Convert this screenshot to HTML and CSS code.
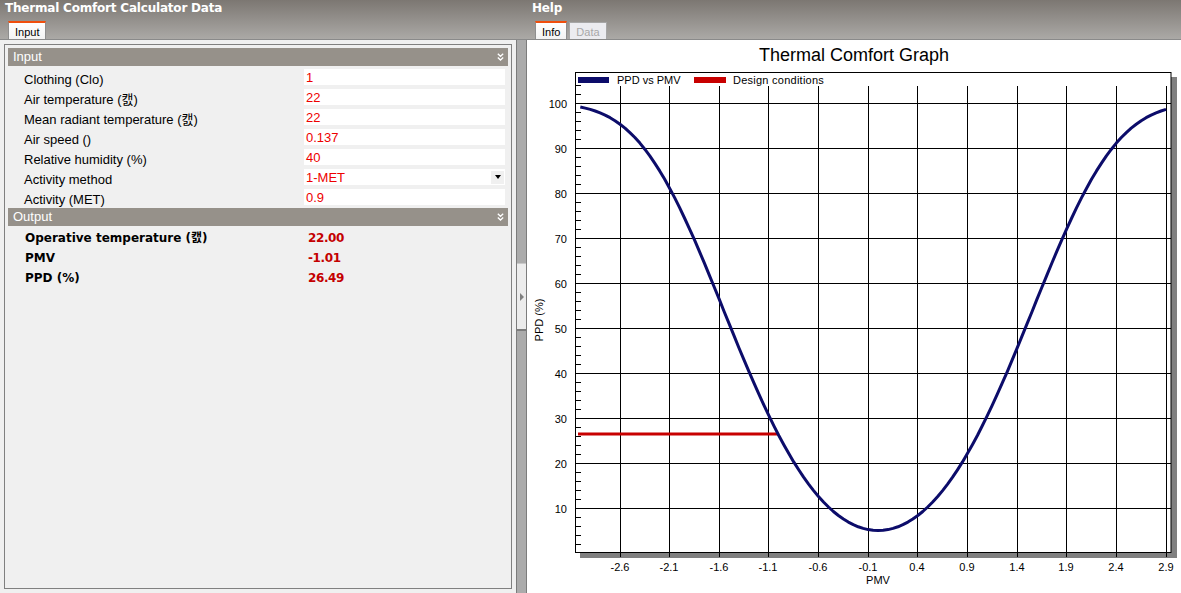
FILE: index.html
```html
<!DOCTYPE html>
<html lang="en">
<head>
<meta charset="utf-8">
<title>Thermal Comfort Calculator</title>
<link rel="stylesheet" href="styles.css">
</head>
<body>
<div class="app">
  <section class="pane pane-left">
    <header class="pane-head">
      <div class="pane-title">Thermal Comfort Calculator Data</div>
      <div class="tabs"><div class="tab active">Input</div></div>
    </header>
    <div class="pane-body gray">
      <div class="box">
        <div class="sect"><span>Input</span><svg class="chev" width="7" height="8" viewBox="0 0 7 8"><polyline points="0.8,0.8 3.5,3.3 6.2,0.8"/><polyline points="0.8,4.5 3.5,7 6.2,4.5"/></svg></div>
        <div class="rows">
          <div class="row"><div class="lbl">Clothing (Clo)</div><div class="val">1</div></div>
          <div class="row"><div class="lbl">Air temperature (캜)</div><div class="val">22</div></div>
          <div class="row"><div class="lbl">Mean radiant temperature (캜)</div><div class="val">22</div></div>
          <div class="row"><div class="lbl">Air speed ()</div><div class="val">0.137</div></div>
          <div class="row"><div class="lbl">Relative humidity (%)</div><div class="val">40</div></div>
          <div class="row"><div class="lbl">Activity method</div><div class="val drop"><span>1-MET</span><span class="drop-btn"><span class="drop-tri"></span></span></div></div>
          <div class="row"><div class="lbl">Activity (MET)</div><div class="val">0.9</div></div>
        </div>
        <div class="sect out"><span>Output</span><svg class="chev" width="7" height="8" viewBox="0 0 7 8"><polyline points="0.8,0.8 3.5,3.3 6.2,0.8"/><polyline points="0.8,4.5 3.5,7 6.2,4.5"/></svg></div>
        <div class="outs">
          <div class="orow"><div class="olbl">Operative temperature (캜)</div><div class="oval">22.00</div></div>
          <div class="orow"><div class="olbl">PMV</div><div class="oval">-1.01</div></div>
          <div class="orow"><div class="olbl">PPD (%)</div><div class="oval">26.49</div></div>
        </div>
      </div>
    </div>
  </section>

  <div class="splitter">
    <div class="split-head"></div>
    <div class="split-bar"><div class="split-btn"><span class="split-tri"></span></div></div>
  </div>

  <section class="pane pane-right">
    <header class="pane-head">
      <div class="pane-title">Help</div>
      <div class="tabs"><div class="tab active">Info</div><div class="tab off">Data</div></div>
    </header>
    <div class="pane-body white">
      <svg class="chart" viewBox="527 40 654 553" width="654" height="553">
        <text class="title" x="854" y="61" text-anchor="middle">Thermal Comfort Graph</text>
        <rect class="shadow" x="580" y="77" width="597" height="481"/>
        <rect class="plot" x="575.5" y="72.5" width="595.5" height="480"/>
        <path class="grid" d="M575 508.5H1171M575 463.5H1171M575 418.5H1171M575 373.5H1171M575 328.5H1171M575 283.5H1171M575 238.5H1171M575 193.5H1171M575 148.5H1171M575 103.5H1171"/>
        <path class="grid" d="M620.5 86V557M669.5 86V557M719.5 86V557M768.5 86V557M818.5 86V557M868.5 86V557M917.5 86V557M967.5 86V557M1017.5 86V557M1066.5 86V557M1116.5 86V557M1166.5 86V557"/>
        <path class="grid" d="M575 544.5h6M575 535.5h6M575 526.5h6M575 517.5h6M575 499.5h6M575 490.5h6M575 481.5h6M575 472.5h6M575 454.5h6M575 445.5h6M575 436.5h6M575 427.5h6M575 409.5h6M575 400.5h6M575 391.5h6M575 382.5h6M575 364.5h6M575 355.5h6M575 346.5h6M575 337.5h6M575 319.5h6M575 310.5h6M575 301.5h6M575 292.5h6M575 274.5h6M575 265.5h6M575 256.5h6M575 247.5h6M575 229.5h6M575 220.5h6M575 211.5h6M575 202.5h6M575 184.5h6M575 175.5h6M575 166.5h6M575 157.5h6M575 139.5h6M575 130.5h6M575 121.5h6M575 112.5h6M575 94.5h6M575 85.5h6"/>
        <g class="ylab" text-anchor="end">
          <text x="567" y="107.5">100</text>
          <text x="567" y="152.5">90</text>
          <text x="567" y="197.5">80</text>
          <text x="567" y="242.5">70</text>
          <text x="567" y="287.5">60</text>
          <text x="567" y="332.5">50</text>
          <text x="567" y="377.5">40</text>
          <text x="567" y="422.5">30</text>
          <text x="567" y="467.5">20</text>
          <text x="567" y="512.5">10</text>
        </g>
        <g class="xlab" text-anchor="middle">
          <text x="620" y="571">-2.6</text>
          <text x="669" y="571">-2.1</text>
          <text x="719" y="571">-1.6</text>
          <text x="768" y="571">-1.1</text>
          <text x="818" y="571">-0.6</text>
          <text x="868" y="571">-0.1</text>
          <text x="917" y="571">0.4</text>
          <text x="967" y="571">0.9</text>
          <text x="1017" y="571">1.4</text>
          <text x="1066" y="571">1.9</text>
          <text x="1116" y="571">2.4</text>
          <text x="1166" y="571">2.9</text>
        </g>
        <text class="axis" x="878" y="584" text-anchor="middle">PMV</text>
        <text class="axis" x="543" y="320" text-anchor="middle" transform="rotate(-90 543 320)">PPD (%)</text>
        <rect class="sw-blue" x="578" y="77" width="31" height="6"/>
        <text class="legend" x="617" y="84">PPD vs PMV</text>
        <rect class="sw-red" x="694" y="77" width="32" height="6"/>
        <text class="legend wide" x="733" y="84">Design conditions</text>
        <line class="design" x1="578" y1="434" x2="778" y2="434"/>
        <polyline class="curve" points=""/>
      </svg>
    </div>
  </section>
</div>
<script src="script.js"></script>
</body>
</html>
```

FILE: styles.css
```css
* { box-sizing: border-box; }
html, body { margin: 0; padding: 0; }
body {
  width: 1181px;
  height: 593px;
  overflow: hidden;
  background: #fff;
  font-family: "Liberation Sans", Arial, "Noto Sans CJK KR", sans-serif;
  font-size: 13px;
  color: #000;
}
.app { display: flex; height: 593px; }
.pane { display: flex; flex-direction: column; height: 593px; }
.pane-left { width: 516px; }
.pane-right { width: 654px; }

.pane-head {
  height: 40px;
  flex: none;
  background: linear-gradient(#7c7772, #aba9a6);
  border-bottom: 1px solid #8a8a8a;
  padding-left: 5px;
}
.pane-title {
  font: bold 12px "DejaVu Sans", sans-serif;
  letter-spacing: -0.2px;
  color: #fff;
  line-height: 15px;
  padding-top: 1px;
  white-space: nowrap;
}
.tabs {
  display: flex;
  align-items: flex-end;
  gap: 2px;
  height: 18px;
  margin: 5px 0 0 3px;
}
.tab {
  height: 18px;
  padding: 0 6px;
  font-size: 11px;
  line-height: 18px;
  color: #000;
  background: linear-gradient(#ffffff, #f3f3f3);
  border: 1px solid #8e8e8e;
  border-bottom: 0;
  border-top: 2px solid #f04e0c;
  white-space: nowrap;
}
.tab.off {
  height: 17px;
  padding: 0 6px;
  line-height: 18px;
  color: #a8a8a8;
  background: #ececf0;
  border: 1px solid #a6a6a6;
  border-bottom: 0;
}

.pane-body { flex: 1; min-height: 0; }
.pane-body.gray { background: #f0f0f0; padding: 4px; }
.pane-body.white { background: #fff; }

.box {
  height: 100%;
  border: 1px solid #808080;
  padding: 3px;
  background: #f0f0f0;
}
.sect {
  height: 18px;
  background: #96918a;
  color: #fff;
  line-height: 18px;
  padding: 0 4px 0 5px;
  display: flex;
  align-items: center;
  justify-content: space-between;
}
.sect.out { margin-top: 1px; }
.chev polyline { fill: none; stroke: #fff; stroke-width: 1.3; }

.rows { margin-top: 1px; }
.row { display: flex; height: 20px; }
.lbl {
  width: 296px;
  flex: none;
  padding-left: 16px;
  padding-top: 3px;
  line-height: 20px;
  white-space: nowrap;
}
.val {
  flex: 1;
  height: 16px;
  margin: 2px 3px 0 0;
  padding-left: 2px;
  background: #fff;
  color: #ee0000;
  line-height: 17px;
}
.val.drop {
  display: flex;
  justify-content: space-between;
  align-items: center;
  padding-right: 1px;
}
.drop-btn {
  width: 13px;
  height: 13px;
  background: #f0f0f0;
  display: flex;
  align-items: center;
  justify-content: center;
}
.drop-tri {
  width: 0;
  height: 0;
  border-left: 3.5px solid transparent;
  border-right: 3.5px solid transparent;
  border-top: 4px solid #000;
}

.outs { padding-top: 2px; }
.orow {
  display: flex;
  height: 20px;
  font: bold 12px "DejaVu Sans", "Noto Sans CJK KR", sans-serif;
  line-height: 20px;
  white-space: nowrap;
}
.olbl { width: 300px; flex: none; padding-left: 17px; color: #000; }
.oval { color: #c40000; letter-spacing: -0.4px; }

.splitter { width: 11px; display: flex; flex-direction: column; height: 593px; }
.split-head {
  height: 40px;
  flex: none;
  background: linear-gradient(#7c7772, #aba9a6);
  border-bottom: 1px solid #8a8a8a;
}
.split-bar {
  flex: 1;
  background: #ababab;
  border-left: 1px solid #7c7c7c;
  border-right: 1px solid #7c7c7c;
}
.split-btn {
  margin-top: 223px;
  height: 68px;
  background: #ececec;
  border-top: 1px solid #c8c8c8;
  border-bottom: 2px solid #7c7c7c;
  display: flex;
  align-items: center;
  justify-content: center;
}
.split-tri {
  width: 0;
  height: 0;
  border-top: 4px solid transparent;
  border-bottom: 4px solid transparent;
  border-left: 4px solid #808080;
}

.chart { display: block; }
.chart text { font-family: "Liberation Sans", Arial, sans-serif; font-size: 11px; fill: #000; }
.chart .title { font-size: 18px; }
.chart .wide { letter-spacing: 0.25px; }
.shadow { fill: #808080; }
.plot { fill: #fff; stroke: #000; stroke-width: 1; }
.grid { fill: none; stroke: #000; stroke-width: 1; shape-rendering: crispEdges; }
.sw-blue { fill: #0c0c6a; }
.sw-red { fill: #c80000; }
.design { stroke: #c80000; stroke-width: 3; }
.curve { fill: none; stroke: #0c0c6a; stroke-width: 3; stroke-linejoin: round; }
```

FILE: script.js
```js
(function () {
  var X = function (p) { return 620 + (p + 2.6) * 99.27; };
  var Y = function (v) { return 553 - 4.5 * v; };
  var pts = [];
  for (var i = 0; i <= 118; i++) {
    var p = -3 + i * 0.05;
    var v = 100 - 95 * Math.exp(-0.03353 * Math.pow(p, 4) - 0.2179 * p * p);
    pts.push(X(p).toFixed(1) + ',' + Y(v).toFixed(1));
  }
  document.querySelector('.curve').setAttribute('points', pts.join(' '));
})();
```
